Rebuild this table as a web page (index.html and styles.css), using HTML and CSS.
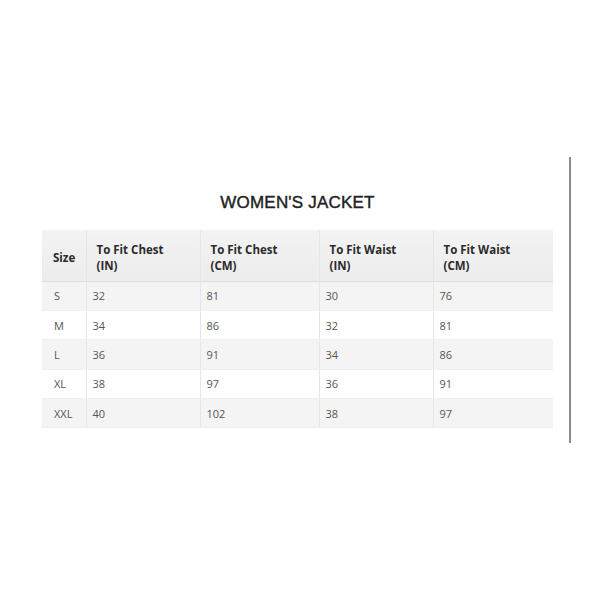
FILE: index.html
```html
<!DOCTYPE html>
<html>
<head>
<meta charset="utf-8">
<link rel="stylesheet" href="styles.css">
</head>
<body>
<div class="page">
  <div class="chart">
    <h1 class="title">WOMEN'S JACKET</h1>
    <table class="sizes">
      <colgroup>
        <col class="c1"><col class="c2"><col class="c3"><col class="c4"><col class="c5">
      </colgroup>
      <thead>
        <tr>
          <th>Size</th>
          <th>To Fit Chest<br>(IN)</th>
          <th>To Fit Chest<br>(CM)</th>
          <th>To Fit Waist<br>(IN)</th>
          <th>To Fit Waist<br>(CM)</th>
        </tr>
      </thead>
      <tbody>
        <tr><td>S</td><td>32</td><td>81</td><td>30</td><td>76</td></tr>
        <tr><td>M</td><td>34</td><td>86</td><td>32</td><td>81</td></tr>
        <tr><td>L</td><td>36</td><td>91</td><td>34</td><td>86</td></tr>
        <tr><td>XL</td><td>38</td><td>97</td><td>36</td><td>91</td></tr>
        <tr><td>XXL</td><td>40</td><td>102</td><td>38</td><td>97</td></tr>
      </tbody>
    </table>
  </div>
  <div class="scrollbar"></div>
</div>
</body>
</html>
```
FILE: styles.css
```css
html, body {
  margin: 0;
  padding: 0;
  background: #ffffff;
}
.page {
  position: relative;
  width: 600px;
  height: 600px;
}
.chart {
  padding-top: 193px;
  padding-left: 42px;
  width: 511px;
}
.title {
  margin: 0 0 17px 0;
  font-family: "Liberation Sans", Arial, sans-serif;
  font-size: 17px;
  line-height: 20px;
  font-weight: normal;
  -webkit-text-stroke: 0.4px #222222;
  color: #222222;
  text-align: center;
  letter-spacing: 0.2px;
}
.sizes {
  width: 511px;
  border-collapse: collapse;
  table-layout: fixed;
  font-family: "Open Sans", "Noto Sans", sans-serif;
}
.c1 { width: 44px; }
.c2 { width: 114px; }
.c3 { width: 119px; }
.c4 { width: 114px; }
.c5 { width: 120px; }
.sizes th {
  height: 51px;
  padding: 5px 10px 0 10px;
  box-sizing: border-box;
  text-align: left;
  vertical-align: middle;
  font-size: 11.5px;
  line-height: 16px;
  font-weight: bold;
  color: #2b2b2b;
  background: linear-gradient(#f3f3f3, #ececec);
  border-bottom: 1px solid #dedede;
  border-left: 1px solid #e6e6e6;
}
.sizes th:first-child {
  border-left: none;
  padding-left: 11px;
}
.sizes td {
  height: 29.4px;
  padding: 0 6px;
  box-sizing: border-box;
  font-size: 11px;
  color: #555555;
  border-left: 1px solid #e6e6e6;
  border-bottom: 1px solid #efefef;
}
.sizes td:first-child {
  border-left: none;
  padding-left: 12px;
}
.sizes tbody tr:nth-child(odd) td {
  background: #f4f4f4;
}
.sizes tbody tr:nth-child(even) td {
  background: #ffffff;
}
.scrollbar {
  position: absolute;
  left: 569px;
  top: 157px;
  width: 2px;
  height: 286px;
  background: #8c8c8c;
}
```
